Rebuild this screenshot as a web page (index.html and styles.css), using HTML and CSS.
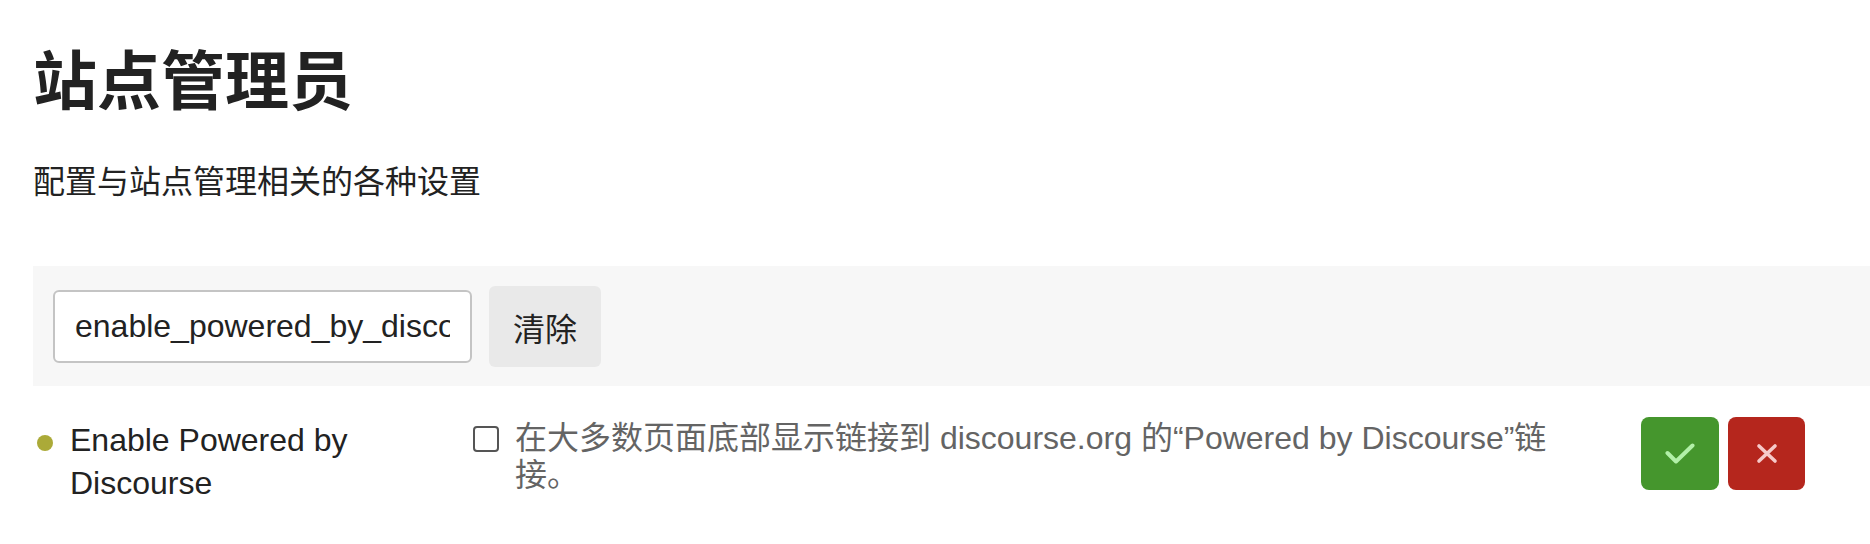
FILE: index.html
```html
<!DOCTYPE html>
<html lang="zh-CN">
<head>
    <meta charset="UTF-8">
    <meta name="viewport" content="width=device-width, initial-scale=1.0">
    <title>站点管理员 - 设置</title>
    <link rel="stylesheet" href="styles.css">
</head>
<body>
    <div class="admin-detail">
        <h1 class="admin-title">站点管理员</h1>
        <p class="admin-desc">配置与站点管理相关的各种设置</p>

        <!-- Filter bar -->
        <div class="admin-controls">
            <input class="filter-input" type="text" value="enable_powered_by_discourse">
            <button class="btn btn-clear">清除</button>
        </div>

        <!-- Single setting row -->
        <div class="setting-row">
            <div class="setting-label">
                <span class="status-dot"></span>
                <span class="label-text">Enable Powered by Discourse</span>
            </div>
            <div class="setting-value">
                <input class="setting-check" type="checkbox">
                <span class="setting-desc">在大多数页面底部显示链接到 discourse.org 的“Powered by Discourse”链接。</span>
            </div>
            <div class="setting-controls">
                <button class="btn btn-ok" title="保存">
                    <svg width="30" height="22" viewBox="0 0 30 22"><polyline points="2.5,10 11,18.5 27.5,2.5" fill="none" stroke="#b2f0a8" stroke-width="4" stroke-linecap="round" stroke-linejoin="round"/></svg>
                </button>
                <button class="btn btn-cancel" title="取消">
                    <svg width="24" height="23" viewBox="0 0 24 23"><path d="M4 4 L20 19 M20 4 L4 19" fill="none" stroke="#f6c9c9" stroke-width="3.6" stroke-linecap="round"/></svg>
                </button>
            </div>
        </div>
    </div>
</body>
</html>
```

FILE: styles.css
```css
body {
    margin: 0;
    font-family: "Liberation Sans", "Noto Sans CJK SC", sans-serif;
    color: #222;
    background: #fff;
}

.admin-detail {
    padding: 44px 0 0 33px;
}

.admin-title {
    margin: 0;
    font-size: 64px;
    line-height: 76px;
    font-weight: bold;
}

.admin-desc {
    margin: 41px 0 0 0;
    font-size: 32px;
    line-height: 43px;
}

/* Filter bar */
.admin-controls {
    margin-top: 62px;
    background: #f7f7f7;
    padding: 20px 20px 19px;
    display: flex;
    align-items: center;
    gap: 17px;
}

.filter-input {
    box-sizing: border-box;
    width: 419px;
    height: 73px;
    padding: 0 20px;
    border: 2px solid #c4c4c4;
    border-radius: 6px;
    font-family: inherit;
    font-size: 32px;
    color: #222;
    background: #fff;
}

.btn {
    border: none;
    font-family: inherit;
    cursor: pointer;
}

.btn-clear {
    height: 81px;
    padding: 0 24px;
    background: #e9e9e9;
    border-radius: 6px;
    font-size: 32px;
    color: #222;
}

/* Setting row */
.setting-row {
    display: grid;
    grid-template-columns: 440px 1168px auto;
    align-items: start;
    margin-top: 28px;
}

.setting-label {
    display: flex;
    align-items: flex-start;
    padding-top: 5px;
}

.status-dot {
    flex-shrink: 0;
    width: 16px;
    height: 16px;
    margin: 16px 17px 0 4px;
    border-radius: 50%;
    background: #abaa38;
}

.label-text {
    font-size: 32px;
    line-height: 43px;
    color: #222;
}

.setting-value {
    display: flex;
    align-items: flex-start;
    gap: 16px;
    padding: 6px 79px 0 0;
}

.setting-check {
    appearance: none;
    flex-shrink: 0;
    box-sizing: border-box;
    width: 26px;
    height: 26px;
    margin: 6px 0 0 0;
    border: 2px solid #555;
    border-radius: 4px;
    background: #fff;
}

.setting-desc {
    font-size: 32px;
    line-height: 37px;
    color: #646464;
}

.setting-controls {
    display: flex;
    gap: 9px;
    margin-top: 3px;
}

.btn-ok,
.btn-cancel {
    height: 73px;
    border-radius: 8px;
    display: flex;
    align-items: center;
    justify-content: center;
    padding: 0;
}

.btn-ok {
    width: 78px;
    background: #45962d;
}

.btn-cancel {
    width: 77px;
    background: #b5261d;
}
```
